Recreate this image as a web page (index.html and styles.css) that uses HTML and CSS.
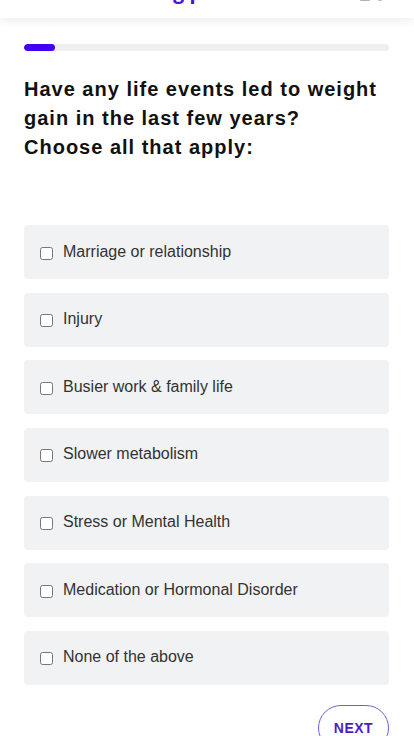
FILE: index.html
```html
<!DOCTYPE html>
<html lang="en">
<head>
  <meta charset="UTF-8" />
  <meta name="viewport" content="width=device-width, initial-scale=1" />
  <title>Quiz</title>
  <link rel="stylesheet" href="styles.css">
</head>
<body>
  <header class="topbar">
    <div class="topbar-inner">
      <span class="logo">g plans</span>
      <div class="top-icons">
        <svg width="12" height="12" viewBox="0 0 12 12"><circle cx="5" cy="5" r="4" fill="none" stroke="#999" stroke-width="1.5"/></svg>
        <svg width="12" height="12" viewBox="0 0 12 12"><rect x="2" y="2" width="8" height="8" fill="none" stroke="#999" stroke-width="1.5"/></svg>
        <svg width="12" height="12" viewBox="0 0 12 12"><circle cx="6" cy="6" r="4" fill="none" stroke="#999" stroke-width="1.5"/></svg>
      </div>
    </div>
  </header>

  <main class="quiz">
    <div class="progress"><div class="progress-fill"></div></div>

    <h1>Have any life events led to weight gain in the last few years?<br />Choose all that apply:</h1>

    <form class="options">
      <label class="option"><input type="checkbox" /> <span>Marriage or relationship</span></label>
      <label class="option"><input type="checkbox" /> <span>Injury</span></label>
      <label class="option"><input type="checkbox" /> <span>Busier work &amp; family life</span></label>
      <label class="option"><input type="checkbox" /> <span>Slower metabolism</span></label>
      <label class="option"><input type="checkbox" /> <span>Stress or Mental Health</span></label>
      <label class="option"><input type="checkbox" /> <span>Medication or Hormonal Disorder</span></label>
      <label class="option"><input type="checkbox" /> <span>None of the above</span></label>
    </form>

    <div class="actions">
      <button class="next-btn" type="button">NEXT</button>
    </div>
  </main>
</body>
</html>
```

FILE: styles.css
```css
:root {
  --purple: #4b10e6;
  --card-bg: #f1f2f4;
  --text: #111;
  --option-text: #333;
}
body {
  margin: 0;
  font-family: "Liberation Sans", Arial, sans-serif;
  background: #fff;
  color: var(--text);
}
.topbar {
  height: 18px;
  overflow: hidden;
  background: #fff;
  box-shadow: 0 4px 10px rgba(0, 0, 0, 0.06);
  position: relative;
}
.topbar-inner {
  height: 40px;
  margin-top: -19px;
  display: flex;
  align-items: flex-start;
  justify-content: center;
  position: relative;
}
.logo {
  font-family: Lato, "Liberation Sans", sans-serif;
  font-weight: 900;
  font-size: 22px;
  line-height: 22px;
  color: var(--purple);
}
.top-icons {
  position: absolute;
  right: 28px;
  top: 9px;
  display: flex;
  gap: 3px;
}
.quiz {
  padding: 0 25px 0 24px;
}
.progress {
  margin-top: 26px;
  height: 7px;
  border-radius: 4px;
  background: #efefef;
  overflow: hidden;
}
.progress-fill {
  width: 31px;
  height: 100%;
  background: #4400f5;
  border-radius: 4px;
}
h1 {
  margin: 24px 0 0;
  font-size: 20px;
  line-height: 29px;
  font-weight: bold;
  letter-spacing: 1px;
  color: var(--text);
}
.options {
  margin-top: 63px;
  display: flex;
  flex-direction: column;
  gap: 13.67px;
}
.option {
  height: 54px;
  display: flex;
  align-items: center;
  padding-left: 16px;
  background: var(--card-bg);
  border-radius: 4px;
  font-size: 16px;
  color: var(--option-text);
}
.option input {
  width: 13px;
  height: 13px;
  margin: 2px 10px 0 0;
}
.option span {
  margin-top: -1px;
}
.actions {
  margin-top: 20px;
  display: flex;
  justify-content: flex-end;
}
.next-btn {
  width: 71px;
  height: 46px;
  border: 1.5px solid #7a5ad8;
  border-radius: 23px;
  background: #fff;
  color: #4a1cc8;
  font-family: "Liberation Sans", Arial, sans-serif;
  font-weight: bold;
  font-size: 14px;
  letter-spacing: 0.5px;
  padding: 0;
  cursor: pointer;
}
```
